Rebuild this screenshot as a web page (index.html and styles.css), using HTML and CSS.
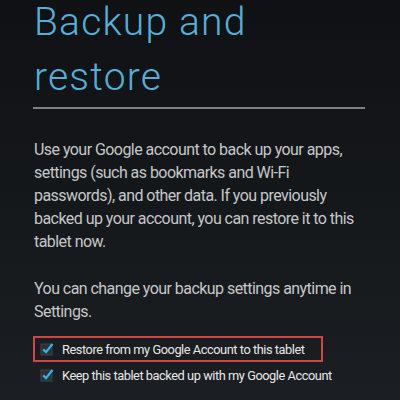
FILE: index.html
```html
<!DOCTYPE html>
<html>
<head>
<meta charset="utf-8">
<link rel="stylesheet" href="styles.css">
</head>
<body>
<div class="screen">
  <h1 class="title">Backup and<br>restore</h1>
  <div class="divider"></div>
  <p class="text intro">Use your Google account to back up your apps, settings (such as bookmarks and Wi-Fi passwords), and other data. If you previously backed up your account, you can restore it to this tablet now.</p>
  <p class="text note">You can change your backup settings anytime in Settings.</p>
  <div class="options">
    <div class="option highlight">
      <svg class="check" width="14" height="14" viewBox="0 0 14 14"><rect x="1" y="2" width="11" height="11" fill="#2b3137" stroke="#3d444b" stroke-width="1"/><path d="M3.2 7.4 L6 10.2 L12.5 2" fill="none" stroke="#33b5e5" stroke-width="2.2"/></svg>
      <span>Restore from my Google Account to this tablet</span>
    </div>
    <div class="option">
      <svg class="check" width="14" height="14" viewBox="0 0 14 14"><rect x="1" y="2" width="11" height="11" fill="#2b3137" stroke="#3d444b" stroke-width="1"/><path d="M3.2 7.4 L6 10.2 L12.5 2" fill="none" stroke="#33b5e5" stroke-width="2.2"/></svg>
      <span>Keep this tablet backed up with my Google Account</span>
    </div>
  </div>
</div>
</body>
</html>
```

FILE: styles.css
```css
html, body {
  margin: 0;
  padding: 0;
}
body {
  width: 400px;
  height: 400px;
  overflow: hidden;
  background: linear-gradient(180deg, #0f1113 0%, #15181b 50%, #1b1e22 100%);
  font-family: Roboto, "Liberation Sans", sans-serif;
}
.screen {
  padding: 0 32px 0 34px;
}
.title {
  margin: -5px 0 0 0;
  font-size: 39px;
  line-height: 55px;
  font-weight: 300;
  color: #52b0db;
  letter-spacing: 1.2px;
}
.divider {
  margin: 2px 0 0 -1px;
  height: 2px;
  width: 332px;
  background: #7d7f82;
}
.text {
  margin: 0;
  font-size: 16px;
  line-height: 23px;
  color: #c6c7c8;
  letter-spacing: -0.55px;
}
.intro {
  margin: 29px 0 24px 0;
}
.note {
  margin: 0 0 13px 0;
}
.options {
  display: flex;
  flex-direction: column;
  align-items: flex-start;
  margin-left: -1px;
}
.option {
  display: flex;
  align-items: center;
  gap: 8px;
  height: 26px;
  box-sizing: border-box;
  padding: 0 16px 0 5px;
  font-size: 12.8px;
  letter-spacing: -0.45px;
  white-space: nowrap;
  color: #e8e8e8;
  border: 2px solid transparent;
}
.option.highlight {
  border-color: #d2463f;
}
.check {
  flex: none;
}
```
